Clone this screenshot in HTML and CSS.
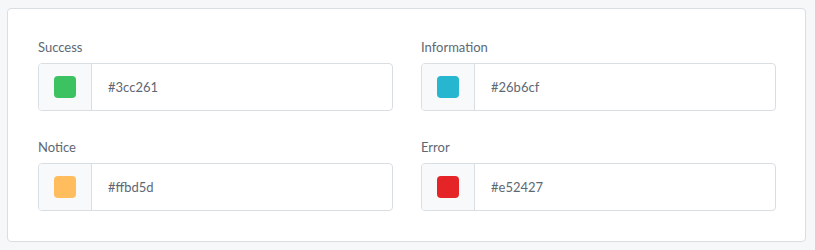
FILE: index.html
```html
<!DOCTYPE html>
<html lang="en">
<head>
    <meta charset="UTF-8">
    <title>Colours</title>
    <link rel="stylesheet" href="styles.css">
</head>
<body>
    <div class="card">
        <div class="field">
            <label class="field-label">Success</label>
            <div class="color-input">
                <span class="swatch-box"><span class="swatch swatch-success"></span></span>
                <span class="color-value">#3cc261</span>
            </div>
        </div>
        <div class="field">
            <label class="field-label">Information</label>
            <div class="color-input">
                <span class="swatch-box"><span class="swatch swatch-info"></span></span>
                <span class="color-value">#26b6cf</span>
            </div>
        </div>
        <div class="field">
            <label class="field-label">Notice</label>
            <div class="color-input">
                <span class="swatch-box"><span class="swatch swatch-notice"></span></span>
                <span class="color-value">#ffbd5d</span>
            </div>
        </div>
        <div class="field">
            <label class="field-label">Error</label>
            <div class="color-input">
                <span class="swatch-box"><span class="swatch swatch-error"></span></span>
                <span class="color-value">#e52427</span>
            </div>
        </div>
    </div>
</body>
</html>
```

FILE: styles.css
```css
body {
    margin: 0;
    padding: 8px 9px 0 7px;
    background: #f5f7f9;
    font-family: Lato, "Open Sans", sans-serif;
    font-size: 13px;
    color: #5e6873;
}
.card {
    background: #fff;
    border: 1px solid #d9dee3;
    border-radius: 4px;
    padding: 28px 29px 30px 30px;
    display: grid;
    grid-template-columns: 1fr 1fr;
    column-gap: 28px;
    row-gap: 26px;
}
.field-label {
    display: block;
    line-height: 20px;
    margin-bottom: 6px;
}
.color-input {
    display: flex;
    height: 48px;
    box-sizing: border-box;
    border: 1px solid #d9dee3;
    border-radius: 4px;
    overflow: hidden;
}
.swatch-box {
    width: 53px;
    box-sizing: border-box;
    background: #f8f9fa;
    border-right: 1px solid #d9dee3;
    display: flex;
    align-items: center;
    justify-content: center;
}
.swatch {
    width: 22px;
    height: 22px;
    border-radius: 4px;
}
.swatch-success { background: #3cc261; }
.swatch-info { background: #26b6cf; }
.swatch-notice { background: #ffbd5d; }
.swatch-error { background: #e52427; }
.color-value {
    display: flex;
    align-items: center;
    padding-left: 16px;
}
```
